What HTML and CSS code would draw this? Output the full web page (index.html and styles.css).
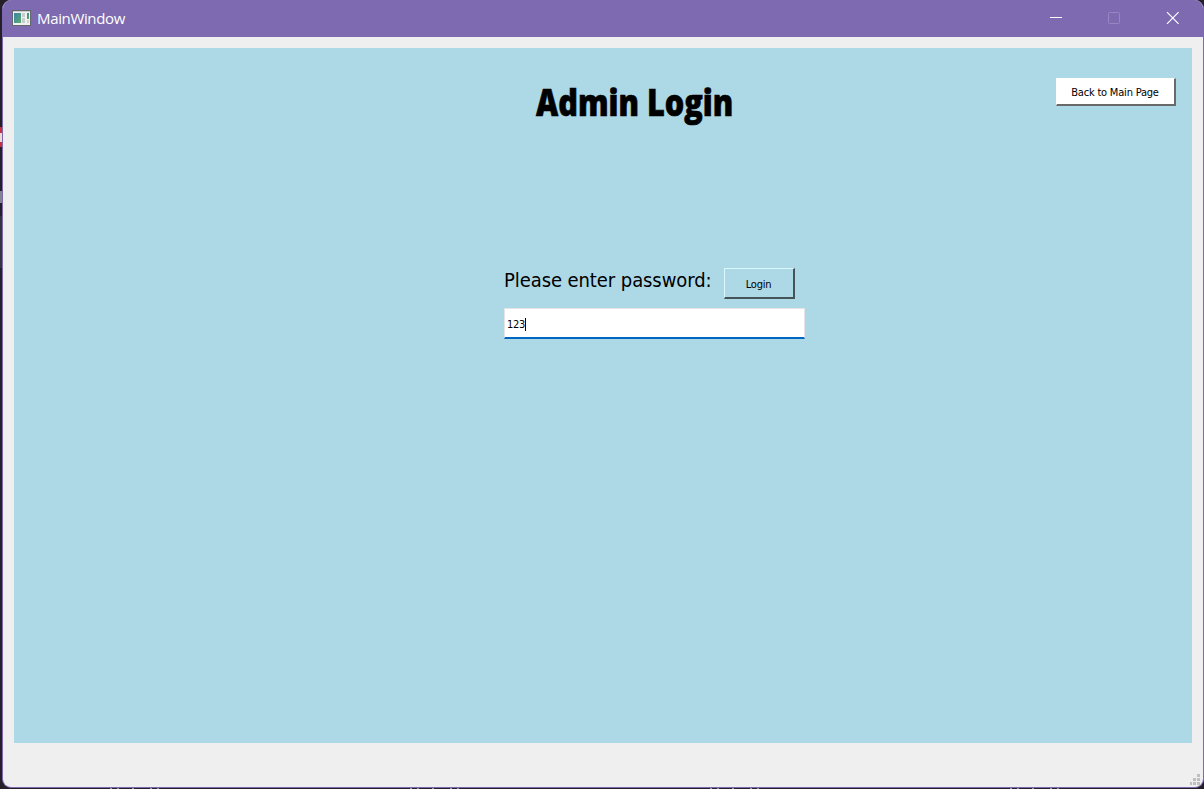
FILE: index.html
```html
<!DOCTYPE html>
<html lang="en">
<head>
<meta charset="utf-8">
<title>MainWindow</title>
<link rel="stylesheet" href="styles.css">
</head>
<body>
<svg class="desktop" width="1204" height="789" aria-hidden="true" shape-rendering="crispEdges">
  <path fill="#c9303a" d="M0 127h2v20H0z"/><path fill="#f0d8d8" d="M0 133h2v9H0z"/>
  <path fill="#858590" d="M0 191h2v12H0z"/><path fill="#38343e" d="M0 216h2v52H0z"/>
  <path fill="#8793aa" d="M110 788h2v1h-2zM117 788h2v1h-2zM132 788h2v1h-2zM150 788h2v1h-2zM157 788h2v1h-2zM410 788h2v1h-2zM417 788h2v1h-2zM432 788h2v1h-2zM450 788h2v1h-2zM457 788h2v1h-2zM710 788h2v1h-2zM717 788h2v1h-2zM732 788h2v1h-2zM750 788h2v1h-2zM757 788h2v1h-2zM1010 788h2v1h-2zM1017 788h2v1h-2zM1032 788h2v1h-2zM1050 788h2v1h-2zM1057 788h2v1h-2z"/>
</svg>
<div class="window">
  <header class="titlebar">
    <svg class="app-icon" width="19" height="16" viewBox="0 0 19 16">
      <defs><linearGradient id="pane" x1="0" y1="0" x2="1" y2="1"><stop offset="0" stop-color="#3c82ae"/><stop offset="1" stop-color="#58ad6c"/></linearGradient></defs>
      <path fill="#66676c" d="M0 0h19v16H0z"/><path fill="#f1f1ef" d="M1 1h17v14H1z"/>
      <path fill="#c9cbc9" d="M1 1h17v1H1z"/>
      <path fill="url(#pane)" d="M2 3h7v10H2z"/>
      <path fill="#c8ccca" d="M10 3h3v4h-3zM10 8h3v5h-3z"/>
      <path fill="url(#pane)" d="M15 3h2v6h-2z"/><path fill="#d0d4d0" d="M15 10h2v3h-2z"/>
    </svg>
    <span class="caption">MainWindow</span>
    <div class="controls">
      <svg width="58" height="37"><path d="M20 17.5h12" stroke="#fff"/></svg>
      <svg width="58" height="37"><rect x="20.5" y="12.5" width="11" height="11" rx="1" fill="none" stroke="#9887c2"/></svg>
      <svg width="58" height="37"><path d="M21 12.2l11.6 11.6M32.6 12.2L21 23.8" stroke="#fff" stroke-width="1.2"/></svg>
    </div>
  </header>
  <main class="panel">
    <div class="top">
      <h1 class="heading"><span>Admin Login</span></h1>
      <button class="button back">Back to Main Page</button>
    </div>
    <form class="login">
      <div class="prompt"><label for="password">Please enter password:</label><button class="button submit" type="button">Login</button></div>
      <div class="field" id="password"><span>123</span><i class="caret"></i></div>
    </form>
  </main>
  <svg class="grip" width="10" height="11" aria-hidden="true"><path fill="#bfbfbf" d="M7 0h3v3H7zM3 4h3v3H3zM7 4h3v3H7zM0 8h2v3H0zM3 8h3v3H3zM7 8h3v3H7z"/></svg>
</div>
</body>
</html>
```
FILE: styles.css
```css
* { box-sizing: border-box; }
body {
  margin: 0;
  width: 1204px;
  height: 789px;
  overflow: hidden;
  background: #241f28;
  padding-left: 2px;
  font-family: "DejaVu Sans Condensed", "DejaVu Sans", sans-serif;
  color: #000;
}
.desktop { position: absolute; left: 0; top: 0; }
.window {
  position: relative;
  width: 1202px;
  height: 788px;
  border: 1px solid #7b68ae;
  border-top: 0;
  border-radius: 9px;
  background: #efefef;
  overflow: hidden;
}
.titlebar {
  display: flex;
  height: 37px;
  background: #7d6ab0;
  color: #fff;
}
.app-icon { margin: 10px 6px 0 9px; }
.caption { font: 15px/37px "Open Sans", sans-serif; letter-spacing: -0.35px; }
.controls { display: flex; margin-left: auto; margin-right: -1px; }
.controls svg { display: block; }
.panel {
  width: 1178px;
  height: 695px;
  margin: 11px 0 0 11px;
  background: #add8e6;
}
.top { display: flex; justify-content: space-between; padding: 30px 16px 0 522px; }
.heading {
  margin: 0;
  width: 200px;
  height: 50px;
  font: 800 37.5px/48px "Open Sans", sans-serif;
  white-space: nowrap;
}
.heading span {
  display: inline-block;
  transform: scaleX(.816);
  transform-origin: left;
  -webkit-text-stroke: 0.7px #000;
}
.button {
  display: block;
  padding: 0;
  border-style: solid;
  border-width: 1px 2px 2px 1px;
  font: 11px/14px "DejaVu Sans Condensed", "DejaVu Sans", sans-serif;
  letter-spacing: -0.2px;
  color: #000;
}
.back {
  width: 120px;
  height: 28px;
  padding: 3px 1px 0 0;
  border-color: #fff #696969 #696969 #fff;
  background: #fff;
}
.login { width: 301px; margin: 140px 0 0 490px; }
.prompt { display: flex; justify-content: space-between; height: 31px; padding-right: 10px; }
.prompt label { font-size: 20px; line-height: 24px; letter-spacing: -0.08px; white-space: nowrap; }
.submit {
  width: 71px;
  height: 31px;
  padding: 3px 1px 0 0;
  border-color: #d9f8ff #445459 #445459 #d9f8ff;
  background: #add8e6;
}
.field {
  display: flex;
  align-items: center;
  height: 31px;
  margin-top: 9px;
  padding: 2px 0 0 2px;
  border: 1px solid #e5e5e5;
  border-bottom: 2px solid #0067c0;
  background: #fff;
  font-size: 11px;
  letter-spacing: -0.3px;
}
.caret { width: 1px; height: 13px; background: #000; }
.grip { position: absolute; right: 3px; bottom: 2px; }
```
